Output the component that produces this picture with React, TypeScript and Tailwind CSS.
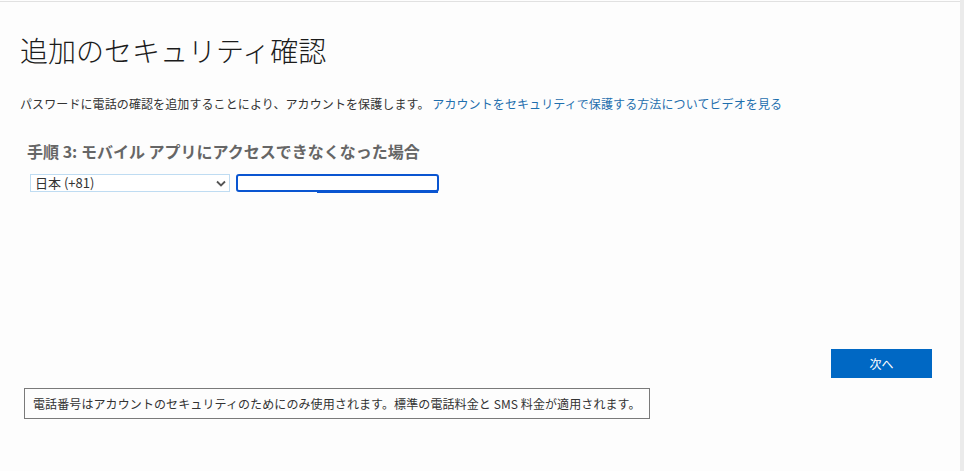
import React from 'react';

const font = { fontFamily: '"Noto Sans CJK JP", "Noto Sans", sans-serif' };

const App: React.FC = () => {
  return (
    <div className="flex w-[964px] h-[471px] bg-[#fdfdfd] overflow-hidden" style={font}>
      <div className="flex-1 pt-[1px]">
        <div className="border-t border-[#e1e1e1] pl-[20px] pr-[28px]">
          <h1 className="pt-[31px] text-[28px] leading-[34px] font-light text-[#1b1b1b]">
            追加のセキュリティ確認
          </h1>

          <p className="mt-[28px] text-[12px] leading-[18px] text-[#333] tracking-[0.1px]">
            パスワードに電話の確認を追加することにより、アカウントを保護します。{' '}
            <a href="#" className="text-[#1f6fae]">
              アカウントをセキュリティで保護する方法についてビデオを見る
            </a>
          </p>

          <h2 className="mt-[28px] ml-[7px] text-[16px] leading-[20px] font-bold text-[#666]">
            手順 3: モバイル アプリにアクセスできなくなった場合
          </h2>

          <div className="mt-[13px] ml-[10px] flex gap-[6px] h-[18px]">
            <div className="relative w-[200px] h-[18px]">
              <div className="w-full h-[18px] border border-[#bfdcf2] bg-white pl-[4px] text-[13px] leading-[16px] text-[#333]">
                日本 (+81)
              </div>
              <svg
                className="absolute right-[4px] top-[6px] pointer-events-none"
                width="10"
                height="7"
                viewBox="0 0 10 7"
              >
                <path d="M1 1.5 L5 5.5 L9 1.5" fill="none" stroke="#555" strokeWidth="1.8" />
              </svg>
            </div>
            <div className="relative w-[203px] h-[18px]">
              <input
                type="text"
                className="block w-full h-[18px] p-0 border-2 border-[#0a55d1] rounded-[3px] bg-white outline-none"
              />
              <span className="absolute left-[81px] right-[1px] bottom-[-1px] h-[2px] bg-[#0a55d1]" />
            </div>
          </div>

          <div className="mt-[157px] flex justify-end">
            <button className="w-[101px] h-[29px] bg-[#0068c4] text-white text-[12px]">次へ</button>
          </div>

          <div className="mt-[10px] ml-[4px] w-[626px] h-[31px] border border-[#7a7a7a] px-[8px] flex items-center text-[12px] text-[#333] tracking-[0.1px]">
            電話番号はアカウントのセキュリティのためにのみ使用されます。標準の電話料金と SMS 料金が適用されます。
          </div>
        </div>
      </div>
      <div className="w-[4px] bg-[#ebebeb]" />
    </div>
  );
};

export default App;
